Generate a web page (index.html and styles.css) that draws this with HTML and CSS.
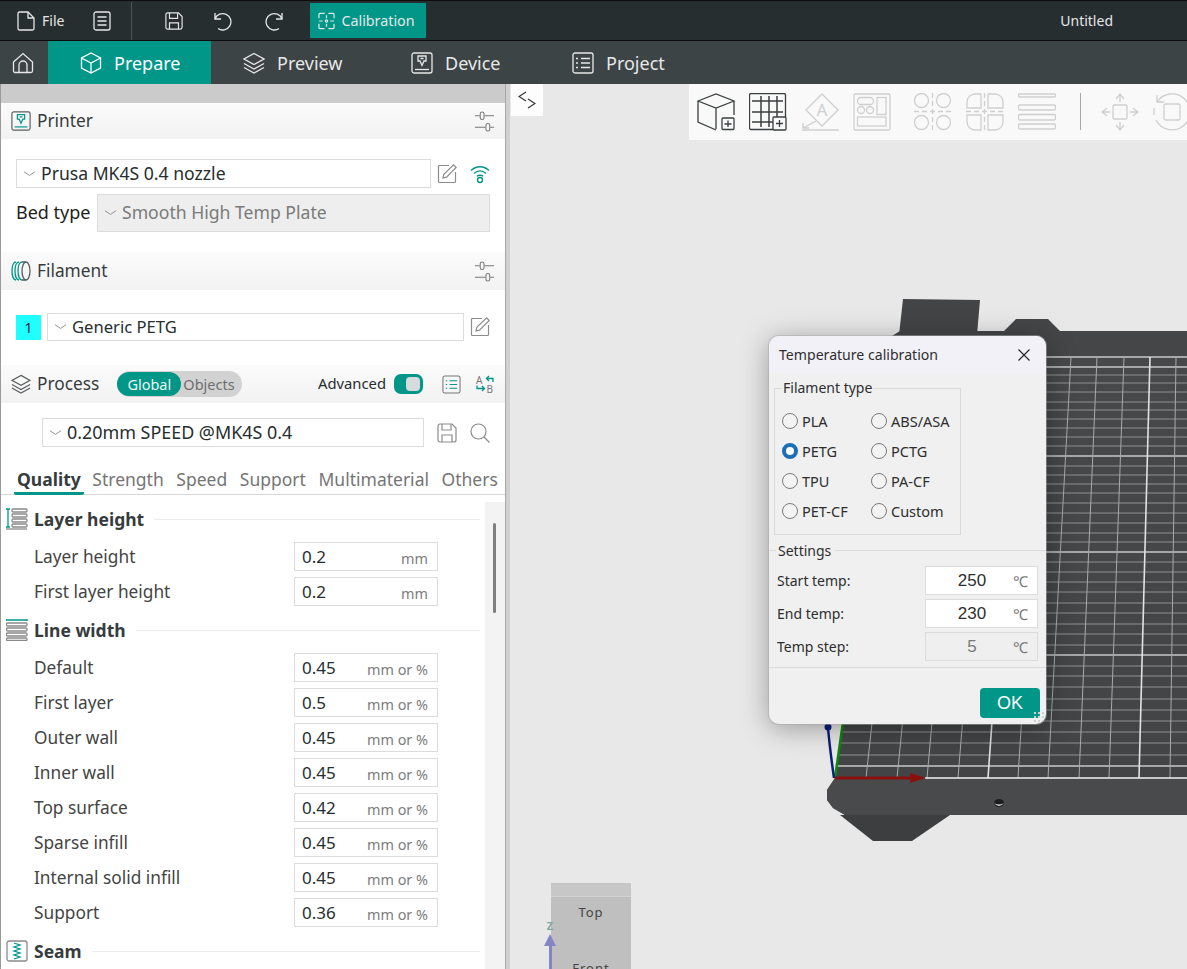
FILE: index.html
```html
<!DOCTYPE html>
<html lang="en">
<head>
<meta charset="utf-8">
<title>Untitled</title>
<link rel="stylesheet" href="styles.css">
</head>
<body>
<svg class="defs">
  <symbol id="i-adjust" viewBox="0 0 22 22"><path d="M1 5H6M11 5H21M1 17H12M17 17H21"/><rect x="6.5" y="1" width="4" height="8" rx="2"/><rect x="12.5" y="13" width="4" height="8" rx="2"/></symbol>
  <symbol id="i-edit" viewBox="0 0 20 20"><path d="M12 1.5H2.5a1 1 0 0 0-1 1v15a1 1 0 0 0 1 1h15a1 1 0 0 0 1-1V8"/><path d="M6 14l.8-3.6L16.6 .9l2.6 2.6L9.5 13.200z"/></symbol>
  <symbol id="i-save" viewBox="0 0 20 20"><path d="M3 1H15L19 5V17a2 2 0 0 1-2 2H3a2 2 0 0 1-2-2V3a2 2 0 0 1 2-2z"/><path d="M5 1V7H14V1M5 19V12H15V19"/></symbol>
  <symbol id="i-chev" viewBox="0 0 14 8"><path d="M1 1.500L7 5.500L13 1.500"/></symbol>
  <symbol id="i-device" viewBox="0 0 22 22"><rect x="1" y="1" width="20" height="20" rx="2"/><path class="accent" d="M4 17.500H18"/><path class="accent" d="M7 4H15V9H13L11 13.500L9 9H7zM9.500 6.500H12.500"/></symbol>
  <symbol id="i-layers" viewBox="0 0 22 22"><path d="M11 1.500L21 7L11 12.500L1 7z"/><path d="M1 11.500L11 17L21 11.500"/><path d="M1 15.500L11 21L21 15.500"/></symbol>
</svg>

<div class="app">
  <header class="titlebar">
    <div class="tb-item">
      <svg class="ic tb-ic" viewBox="0 0 18 20"><path d="M2.500 1H11L17 7V17.500a1.500 1.500 0 0 1-1.500 1.500H2.500A1.500 1.500 0 0 1 1 17.500V2.500A1.500 1.500 0 0 1 2.500 1z"/><path d="M11 1V7H17"/></svg>
      <span>File</span>
    </div>
    <svg class="ic tb-ic tb-doc" viewBox="0 0 18 20"><rect x="1" y="1" width="16" height="18" rx="2"/><path d="M4.500 6H13.500M4.500 10H13.500M4.500 14H13.500"/></svg>
    <div class="tb-sep"></div>
    <svg class="ic tb-ic tb-save"><use href="#i-save"/></svg>
    <svg class="ic tb-ic tb-undo" viewBox="0 0 20 20"><path d="M3 2V8H9"/><path d="M3 8A8.200 8.200 0 1 1 6 17.500"/></svg>
    <svg class="ic tb-ic tb-redo" viewBox="0 0 20 20"><path d="M17 2V8H11"/><path d="M17 8A8.200 8.200 0 1 0 14 17.500"/></svg>
    <div class="tb-calib">
      <svg class="ic tb-ic" viewBox="0 0 18 18"><path d="M1 6V2a1 1 0 0 1 1-1H7M11 1H16a1 1 0 0 1 1 1V6M17 12V16a1 1 0 0 1-1 1H11M7 17H2a1 1 0 0 1-1-1V12M1 9H5M13 9H17M9 3V6M9 12V15"/><circle cx="9" cy="9" r="1.200"/></svg>
      <span>Calibration</span>
    </div>
    <div class="tb-title">Untitled</div>
  </header>

  <nav class="navbar">
    <div class="nav-home">
      <svg class="ic nav-ic" viewBox="0 0 22 22"><path d="M1.500 10L11 1.500L20.500 10V19a1.500 1.500 0 0 1-1.500 1.500H3A1.500 1.500 0 0 1 1.500 19z"/><path d="M7 20.500V13a4 4 0 0 1 8 0V20.500"/></svg>
    </div>
    <div class="nav-tab nav-active w-prepare">
      <svg class="ic nav-ic" viewBox="0 0 22 22"><path d="M11 1L20.500 6V16L11 21L1.500 16V6z"/><path d="M1.500 6L11 11L20.500 6M11 11V21"/></svg>
      <span>Prepare</span>
    </div>
    <div class="nav-tab w-preview">
      <svg class="ic nav-ic"><use href="#i-layers"/></svg>
      <span>Preview</span>
    </div>
    <div class="nav-tab w-device">
      <svg class="ic nav-ic"><use href="#i-device"/></svg>
      <span>Device</span>
    </div>
    <div class="nav-tab">
      <svg class="ic nav-ic" viewBox="0 0 22 22"><rect x="1" y="1" width="20" height="20" rx="2"/><path d="M4 6.500H6M9 6.500H18M4 11H6M9 11H18M4 15.500H6M9 15.500H18"/></svg>
      <span>Project</span>
    </div>
  </nav>

  <main class="workspace">
    <aside class="sidebar">
      <div class="side-gap"></div>

      <div class="sec-head sec-printer">
        <svg class="ic head-ic"><use href="#i-device"/></svg>
        <span class="sec-title">Printer</span>
        <svg class="ic adjust"><use href="#i-adjust"/></svg>
      </div>
      <div class="printer-row">
        <div class="select sel-printer"><svg class="ic chev"><use href="#i-chev"/></svg><span>Prusa MK4S 0.4 nozzle</span></div>
        <svg class="ic act"><use href="#i-edit"/></svg>
        <svg class="ic wifi" viewBox="0 0 20 20"><path d="M1 6.500C6 1.500 14 1.500 19 6.500M4 9.500C7.500 6 12.500 6 16 9.500M6.800 12.300C8.500 10.800 11.500 10.800 13.200 12.300"/><circle cx="10" cy="16" r="2.500"/></svg>
      </div>
      <div class="bed-row">
        <span class="bed-label">Bed type</span>
        <div class="select sel-bed"><svg class="ic chev"><use href="#i-chev"/></svg><span>Smooth High Temp Plate</span></div>
      </div>

      <div class="sec-head sec-filament">
        <svg class="ic head-ic fil-ic" viewBox="0 0 20 20"><path class="accent" d="M5 1C2.500 1 1 5 1 10S2.500 19 5 19M8 1C5.500 1 4 5 4 10S5.500 19 8 19M11 1C8.500 1 7 5 7 10S8.500 19 11 19"/><ellipse cx="15" cy="10" rx="4" ry="9"/><path d="M11 1H15M11 19H15"/></svg>
        <span class="sec-title">Filament</span>
        <svg class="ic adjust"><use href="#i-adjust"/></svg>
      </div>
      <div class="filament-row">
        <div class="swatch">1</div>
        <div class="select sel-filament"><svg class="ic chev"><use href="#i-chev"/></svg><span>Generic PETG</span></div>
        <svg class="ic act"><use href="#i-edit"/></svg>
      </div>

      <div class="sec-head sec-process">
        <svg class="ic head-ic"><use href="#i-layers"/></svg>
        <span class="sec-title">Process</span>
        <div class="pill"><span class="pill-on">Global</span><span class="pill-off">Objects</span></div>
        <span class="adv">Advanced</span>
        <div class="toggle"><span class="knob"></span></div>
        <svg class="ic proc-list" viewBox="0 0 20 20"><rect x="1" y="1" width="18" height="18" rx="2"/><path class="accent" d="M4 6H5.500M4 10H5.500M4 14H5.500M8 6H16M8 10H16M8 14H16"/></svg>
        <svg class="ic proc-ab" viewBox="0 0 20 20"><text class="ab" x="1" y="9.500">A</text><text class="ab" x="11.500" y="18.500">B</text><path class="accent" d="M18 8V4.500H11.500M14 2L11.500 4.500L14 7M2 11.500V14.500H9M7 12L9.500 14.500L7 17"/></svg>
      </div>
      <div class="process-row">
        <div class="select sel-process"><svg class="ic chev"><use href="#i-chev"/></svg><span>0.20mm SPEED @MK4S 0.4</span></div>
        <svg class="ic act act-save"><use href="#i-save"/></svg>
        <svg class="ic act act-search" viewBox="0 0 20 20"><circle cx="8.500" cy="8.500" r="7.500"/><path d="M14 14L19.500 19.500"/></svg>
      </div>

      <div class="tabs">
        <span class="tab tab-on">Quality</span>
        <span class="tab">Strength</span>
        <span class="tab">Speed</span>
        <span class="tab">Support</span>
        <span class="tab">Multimaterial</span>
        <span class="tab">Others</span>
      </div>

      <div class="params">
        <div class="param-list">
          <div class="group">
            <svg class="ic group-ic" viewBox="0 0 22 22"><path class="accent" d="M2 1V19M0 1H4M0 19H4"/><rect x="6" y="1" width="15" height="3" rx="1"/><rect x="6" y="6" width="15" height="3" rx="1"/><rect x="6" y="11" width="15" height="3" rx="1"/><rect x="6" y="16" width="15" height="3" rx="1"/><path d="M0 21H21"/></svg>
            <span class="group-title">Layer height</span>
          </div>
          <div class="row"><span class="row-label">Layer height</span><div class="field"><span class="val">0.2</span><span class="unit">mm</span></div></div>
          <div class="row"><span class="row-label">First layer height</span><div class="field"><span class="val">0.2</span><span class="unit">mm</span></div></div>

          <div class="group">
            <svg class="ic group-ic" viewBox="0 0 22 22"><path class="accent" d="M0 1H21M0 0V2M21 0V2"/><rect x="0.500" y="4" width="20.500" height="3" rx="1"/><rect x="0.500" y="9" width="20.500" height="3" rx="1"/><rect x="0.500" y="14" width="20.500" height="3" rx="1"/><rect x="0.500" y="19" width="20.500" height="2.500" rx="1"/></svg>
            <span class="group-title">Line width</span>
          </div>
          <div class="row"><span class="row-label">Default</span><div class="field"><span class="val">0.45</span><span class="unit">mm or %</span></div></div>
          <div class="row"><span class="row-label">First layer</span><div class="field"><span class="val">0.5</span><span class="unit">mm or %</span></div></div>
          <div class="row"><span class="row-label">Outer wall</span><div class="field"><span class="val">0.45</span><span class="unit">mm or %</span></div></div>
          <div class="row"><span class="row-label">Inner wall</span><div class="field"><span class="val">0.45</span><span class="unit">mm or %</span></div></div>
          <div class="row"><span class="row-label">Top surface</span><div class="field"><span class="val">0.42</span><span class="unit">mm or %</span></div></div>
          <div class="row"><span class="row-label">Sparse infill</span><div class="field"><span class="val">0.45</span><span class="unit">mm or %</span></div></div>
          <div class="row"><span class="row-label">Internal solid infill</span><div class="field"><span class="val">0.45</span><span class="unit">mm or %</span></div></div>
          <div class="row"><span class="row-label">Support</span><div class="field"><span class="val">0.36</span><span class="unit">mm or %</span></div></div>

          <div class="group">
            <svg class="ic group-ic" viewBox="0 0 22 22"><rect x="1" y="1" width="20" height="20" rx="2"/><path class="accent" d="M8 3L14 5L8 7L14 9L8 11L14 13L8 15L14 17L8 19"/></svg>
            <span class="group-title">Seam</span>
          </div>
        </div>
        <div class="scroll-track"><div class="scroll-thumb"></div></div>
      </div>
    </aside>

    <div class="splitter"></div>

    <section class="viewport">
      <svg class="scene" viewBox="510 84 677 885">
        <defs>
          <linearGradient id="bedfill" x1="0" y1="0" x2="0" y2="1">
            <stop offset="0" stop-color="#464849"/>
            <stop offset="1" stop-color="#424445"/>
          </linearGradient>
        </defs>
        <path class="bed-flag" d="M903 299L980 300L977 335H899z"/>
        <path class="bed-body" d="M827 800V790L835 778L843 724L892 336L900 331H1004L1016 319H1048L1060 331H1187V815H845L833 808z"/>
        <path class="bed-foot" d="M840 815H950L912 841H873z"/>
        <path class="bed-front" d="M827 800V790L835 778H1187V815H845L833 808z"/>
        <path class="bed-top" d="M893 357H1187V778H835z"/>
        <ellipse class="bed-hole" cx="999" cy="803" rx="5" ry="4"/>
        <path class="bed-hole-lit" d="M994 803Q999 809 1004 803Q999 806 994 803z"/>
        <g class="grid-h">
          <path d="M900 375H1187M900 383H1187M900 392H1187M900 402H1187M900 410H1187M900 419H1187M900 428H1187M900 437H1187M900 446H1187M900 466H1187M900 475H1187M900 484H1187M900 493H1187M900 503H1187M900 513H1187M900 523H1187M900 533H1187M900 542H1187M900 562H1187M900 572H1187M900 582H1187M900 592H1187M900 603H1187M900 613H1187M900 624H1187M900 634H1187M900 645H1187M900 666H1187M900 676H1187M900 687H1187M900 699H1187M900 710H1187M900 721H1187M842 732H1187M841 743H1187M839 755H1187"/>
        </g>
        <g class="grid-hb">
          <path d="M900 357H1187M900 367H1187M900 456H1187M900 552H1187M900 655H1187M837 766H1187"/>
        </g>
        <g class="grid-v">
          <path d="M912 357L866 778M939 357L897 778M965 357L927 778M992 357L958 778M1044 357L1018 778M1071 357L1048 778M1097 357L1079 778M1124 357L1109 778M1176 357L1170 778"/>
        </g>
        <g class="grid-vb">
          <path d="M1018 357L988 778M1150 357L1139 778"/>
        </g>
        <path class="bed-edge" d="M925 778H1187"/>
        <path class="axis-y" d="M835 778L843 722"/>
        <path class="axis-z" d="M834 778Q830 750 828 728"/>
        <circle class="axis-z-tip" cx="828" cy="727" r="3.500"/>
        <path class="axis-x" d="M835 778H912"/>
        <path class="axis-x-tip" d="M910 773L926 778L910 783z"/>
      </svg>

      <div class="collapse">
        <svg class="ic collapse-ic" viewBox="0 0 18 18"><path d="M8 1L1 5.500L8 10M10 8L17 12.500L10 17"/></svg>
      </div>

      <div class="toolbar">
        <svg class="tool tool-on" viewBox="0 0 38 38"><path d="M1 8L19 1L37 8L19 15zM1 8V29L19 37M19 15V36M37 8V22"/><rect x="25" y="25" width="12" height="11.500" rx="1"/><path d="M27.500 31H34.500M31 27.500V34"/></svg>
        <svg class="tool tool-on" viewBox="0 0 38 38"><path d="M24 36.500H2a1.500 1.500 0 0 1-1.500-1.500V2A1.500 1.500 0 0 1 2 .5H35A1.500 1.500 0 0 1 36.500 2V24"/><path class="thick" d="M3 8H34M3 19H34M3 29H24M12 3V34M20 3V34M28 3V24"/><rect class="paper" x="24" y="24" width="13" height="13" rx="1"/><path d="M27 30.500H34M30.500 27V34"/></svg>
        <svg class="tool" viewBox="0 0 38 38"><path d="M21 1L37 17L21 33L5 17z"/><path d="M15 28L2 35V30M2 35H8M1 37H38"/><text class="tool-a" x="21" y="23">A</text></svg>
        <svg class="tool" viewBox="0 0 38 38"><rect x="1" y="1" width="36" height="36" rx="1.500"/><rect x="4.500" y="4.500" width="16" height="7" rx="3.500"/><circle cx="8" cy="17" r="3.500"/><circle cx="17" cy="17" r="3.500"/><rect x="24" y="4.500" width="9" height="17"/><rect x="4.500" y="24" width="28.500" height="9"/></svg>
        <svg class="tool tool-gap" viewBox="0 0 38 38"><circle cx="7.500" cy="7.500" r="7"/><circle cx="29.500" cy="7.500" r="7"/><circle cx="7.500" cy="29.500" r="7"/><circle cx="29.500" cy="29.500" r="7"/><path d="M18.500 0V38M0 18.500H38" stroke-dasharray="5 3"/></svg>
        <svg class="tool" viewBox="0 0 38 38"><path d="M15 1H9A8 8 0 0 0 1 9V15H15zM22 1H29A8 8 0 0 1 37 9V15H22zM15 22H1V29A8 8 0 0 0 9 37H15zM22 22H37V29A8 8 0 0 1 29 37H22z"/><path d="M18.500 0V38M0 18.500H38" stroke-dasharray="5 3"/></svg>
        <svg class="tool" viewBox="0 0 38 38"><rect x="0.500" y="1" width="37" height="3" rx="1"/><rect x="0.500" y="12" width="37" height="5" rx="1.500"/><rect x="0.500" y="21.500" width="37" height="5.500" rx="1.500"/><rect x="0.500" y="31" width="37" height="5" rx="1.500"/></svg>
        <div class="tool-sep"></div>
        <svg class="tool tool-move" viewBox="0 0 38 38"><rect x="12" y="12" width="14" height="14" rx="1.500"/><path d="M19 2V9M15 6L19 1L23 6M19 29V36M15 32L19 37L23 32M2 19H9M6 15L1 19L6 23M29 19H36M32 15L37 19L32 23"/></svg>
        <svg class="tool" viewBox="0 0 38 38"><rect x="11" y="11" width="16" height="16" rx="1.500"/><path d="M4 9A18 18 0 1 1 3 27" /><path d="M4 2V9H11"/><path d="M1 15V22" /></svg>
      </div>

      <div class="gizmo">
        <div class="gizmo-top"></div>
        <div class="gizmo-label">Top</div>
        <div class="gizmo-label gizmo-front">Front</div>
      </div>
      <div class="gizmo-axis">
        <span class="gizmo-z">Z</span>
        <span class="gizmo-tip"></span>
        <span class="gizmo-line"></span>
      </div>

      <div class="dialog">
        <div class="dlg-title">
          <span>Temperature calibration</span>
          <svg class="ic dlg-close" viewBox="0 0 12 12"><path d="M0.500 .5L11.500 11.500M11.500 .5L.5 11.500"/></svg>
        </div>
        <fieldset class="dlg-fil">
          <legend>Filament type</legend>
          <div class="radio-grid">
            <label class="radio"><input type="radio" name="fil">PLA</label>
            <label class="radio"><input type="radio" name="fil">ABS/ASA</label>
            <label class="radio"><input type="radio" name="fil" checked>PETG</label>
            <label class="radio"><input type="radio" name="fil">PCTG</label>
            <label class="radio"><input type="radio" name="fil">TPU</label>
            <label class="radio"><input type="radio" name="fil">PA-CF</label>
            <label class="radio"><input type="radio" name="fil">PET-CF</label>
            <label class="radio"><input type="radio" name="fil">Custom</label>
          </div>
        </fieldset>
        <div class="dlg-settings-head"><span>Settings</span></div>
        <div class="dlg-row"><span class="dlg-label">Start temp:</span><div class="dlg-field"><span class="dlg-val">250</span><span class="dlg-unit">℃</span></div></div>
        <div class="dlg-row"><span class="dlg-label">End temp:</span><div class="dlg-field"><span class="dlg-val">230</span><span class="dlg-unit">℃</span></div></div>
        <div class="dlg-row"><span class="dlg-label">Temp step:</span><div class="dlg-field dlg-off"><span class="dlg-val">5</span><span class="dlg-unit">℃</span></div></div>
        <div class="dlg-foot"><button class="dlg-ok" type="button">OK</button></div>
        <div class="grip"></div>
      </div>
    </section>
  </main>
</div>
</body>
</html>
```
FILE: styles.css
```css
* { box-sizing: border-box; }
html, body { margin: 0; height: 100%; }
body { font-family: "Noto Sans", "Liberation Sans", sans-serif; color: #262e30; overflow: hidden; }
.defs { display: none; }
.app { display: flex; flex-direction: column; height: 969px; width: 1187px; overflow: hidden; }
.ic { fill: none; stroke: currentColor; stroke-width: 1.3; flex: none; display: block; }
.accent { stroke: var(--acc, #009688); }

/* title bar */
.titlebar { height: 41px; flex: none; background: #262e30; border-top: 1px solid #0c0c0c; border-bottom: 1px solid #0c0c0c; display: flex; align-items: center; color: #e6e6e6; font-size: 14px; padding-left: 17px; }
.tb-item { display: flex; align-items: center; gap: 7px; }
.tb-ic { width: 18px; height: 20px; }
.tb-doc { margin-left: 29px; }
.tb-sep { width: 1px; height: 38px; background: #4c5456; margin-left: 20px; }
.tb-save { margin-left: 33px; }
.tb-undo { margin-left: 29px; width: 20px; }
.tb-redo { margin-left: 33px; width: 20px; }
.tb-calib { margin-left: 25px; width: 116px; height: 35px; background: #009688; display: flex; align-items: center; gap: 6px; padding-left: 8px; font-size: 14.300px; }
.tb-calib .tb-ic { width: 17px; height: 18px; }
.tb-title { margin-left: auto; margin-right: 74px; }

/* nav */
.navbar { height: 43px; flex: none; background: #3d4446; display: flex; align-items: stretch; color: #e8e8e8; font-size: 18px; --acc: currentColor; }
.nav-home { width: 48px; display: flex; align-items: center; padding-left: 12px; }
.nav-ic { width: 22px; height: 22px; }
.nav-tab { display: flex; align-items: center; gap: 12px; padding-left: 32px; }
.nav-active { background: #009688; color: #fff; }
.w-prepare { width: 163px; }
.w-preview { width: 168px; }
.w-device { width: 161px; }

/* workspace */
.workspace { flex: 1; display: flex; min-height: 0; }
.sidebar { width: 505px; flex: none; background: #fff; border-left: 1px solid #9a9a9a; display: flex; flex-direction: column; min-height: 0; overflow: hidden; }
.side-gap { height: 19px; flex: none; background: #cbcbcb; margin-left: -1px; }
.splitter { width: 5px; flex: none; background: #d0d0d0; border-left: 1px solid #a8a8a8; }

.sec-head { flex: none; display: flex; align-items: center; background: linear-gradient(#fbfbfb, #f2f2f2); padding-left: 10px; font-size: 17.300px; }
.sec-printer { height: 36px; }
.sec-filament { height: 38px; margin-top: 20px; }
.sec-process { height: 38px; margin-top: 24px; }
.head-ic { width: 20px; height: 20px; color: #5a5f60; }
.sec-title { margin: -2px 0 0 6px; color: #363c3e; }
.adjust { width: 21px; height: 21px; margin-left: auto; margin-right: 10px; color: #777; stroke-width: 1.1; }

.select { display: flex; align-items: center; height: 29px; border: 1px solid #dcdcdc; background: #fff; font-size: 17.600px; color: #262e30; padding-left: 6px; gap: 5px; }
.select span { margin-top: -2px; }
.chev { width: 13px; height: 8px; color: #8a8a8a; stroke-width: 1; }
.printer-row { display: flex; align-items: center; margin: 20px 0 0 15px; flex: none; }
.sel-printer { width: 415px; }
.act { width: 20px; height: 20px; margin-left: 6px; color: #8c8c8c; stroke-width: 1.2; }
.wifi { width: 20px; height: 20px; margin-left: 13px; color: #009688; stroke-width: 1.4; }
.bed-row { display: flex; align-items: center; margin: 6px 0 0 15px; flex: none; }
.bed-label { width: 81px; font-size: 18px; color: #1e1e1e; margin-top: -2px; }
.sel-bed { width: 393px; height: 38px; background: #eeeeee; color: #7a7a7a; }

.filament-row { display: flex; align-items: center; margin: 23px 0 0 15px; flex: none; }
.swatch { width: 25px; height: 25px; background: #1fffff; font-size: 14px; display: flex; align-items: center; justify-content: center; margin-right: 6px; }
.sel-filament { width: 417px; height: 28px; font-size: 16.600px; }
.filament-row .act { margin-left: 6px; }

.pill { display: flex; align-items: center; margin-left: 18px; width: 125px; height: 26px; background: #d2d2d2; border-radius: 13px; font-size: 14.500px; }
.pill-on { background: #009688; color: #e9f5f3; height: 24px; width: 64px; border-radius: 12px; display: flex; align-items: center; justify-content: center; }
.pill-off { color: #6e6e6e; margin-left: 2px; }
.adv { margin-left: auto; font-size: 14.800px; color: #262e30; margin-top: -2px; }
.toggle { margin-left: 8px; width: 29px; height: 20px; background: #009688; border-radius: 7px; padding: 3px 3px 3px 12px; }
.knob { display: block; width: 14px; height: 14px; background: #d6dcdc; border-radius: 4px; }
.proc-list { width: 19px; height: 19px; margin-left: 19px; color: #777; stroke-width: 1.1; }
.proc-ab { width: 20px; height: 20px; margin-left: 14px; margin-right: 10px; color: #777; stroke-width: 1.3; }
.ab { font-size: 10px; fill: #777; stroke: none; }

.process-row { display: flex; align-items: center; margin: 15px 0 0 41px; flex: none; }
.sel-process { width: 382px; font-size: 17.900px; }
.act-save { margin-left: 13px; }
.act-search { margin-left: 13px; }

.tabs { flex: none; height: 48px; display: flex; align-items: flex-end; gap: 12.600px; padding-left: 17px; border-bottom: 1px solid #d8d8d8; margin-left: -1px; font-size: 17.500px; color: #757575; white-space: nowrap; }
.tab { height: 32px; padding-top: 5px; }
.tab-on { font-weight: 700; color: #363c3e; border-bottom: 3px solid #009688; height: 33px; margin-left: -3px; padding: 5px 3px 0; margin-right: -4px; margin-bottom: -1px; border-radius: 2px; }

.params { flex: 1; display: flex; min-height: 0; }
.param-list { width: 484px; flex: none; padding: 6px 5px 0 5px; }
.scroll-track { flex: 1; margin-top: 7px; background: #f3f3f3; padding: 21px 0 0 8px; }
.scroll-thumb { width: 3px; height: 90px; background: #808080; border-radius: 2px; }

.group { height: 36px; margin-bottom: 5px; display: flex; align-items: center; }
.group-ic { width: 22px; height: 22px; color: #8a8a8a; }
.group-title { font-weight: 700; font-size: 17.500px; color: #363c3e; margin-left: 6px; display: flex; }
.group::after { content: ""; flex: 1; height: 1px; background: #ececec; margin-left: 10px; }
.row { display: flex; align-items: center; height: 29px; margin-bottom: 6px; padding-left: 28px; }
.row-label { width: 260px; font-size: 17.300px; color: #444; }
.field { width: 144px; height: 29px; border: 1px solid #dcdcdc; display: flex; align-items: center; justify-content: space-between; padding: 0 9px 0 7px; }
.val { font-size: 17px; color: #262e30; }
.unit { font-size: 14.400px; color: #7d7d7d; margin-top: 3px; }

/* viewport */
.viewport { flex: 1; position: relative; background: #e8e8e8; overflow: hidden; min-width: 0; }
.scene { position: absolute; left: 0; top: 0; width: 677px; height: 885px; }
.bed-flag { fill: #424445; }
.bed-body { fill: #444647; }
.bed-foot { fill: #3c3e3f; }
.bed-front { fill: #484a4b; }
.bed-top { fill: url(#bedfill); }
.bed-hole { fill: #1e1e1e; }
.bed-hole-lit { fill: #e6e6e6; }
.grid-h path { stroke: #8f9191; stroke-width: 1; fill: none; }
.grid-hb path { stroke: #c6c7c7; stroke-width: 1.500; fill: none; }
.grid-v path { stroke: #a9abab; stroke-width: 1; fill: none; }
.grid-vb path { stroke: #e2e2e2; stroke-width: 1.600; fill: none; }
.bed-edge { stroke: #f2f2f2; stroke-width: 1.500; fill: none; }
.axis-y { stroke: #0b8a0b; stroke-width: 2.500; fill: none; }
.axis-z { stroke: #0c1f7a; stroke-width: 2.500; fill: none; }
.axis-z-tip { fill: #0c1f7a; }
.axis-x { stroke: #8a1010; stroke-width: 3; fill: none; }
.axis-x-tip { fill: #8a1010; }

.collapse { position: absolute; left: 1px; top: 0; width: 32px; height: 32px; background: #fdfdfd; padding: 7px; }
.collapse-ic { width: 18px; height: 18px; color: #333; stroke-width: 1.200; }

.toolbar { position: absolute; left: 179px; top: 0; right: 0; height: 56px; background: #f9f9f9; display: flex; align-items: flex-start; gap: 14px; padding: 9px 0 0 8px; overflow: hidden; }
.tool { width: 38px; height: 38px; flex: none; fill: none; stroke: #cfcfcf; stroke-width: 1.300; }
.tool-on { stroke: #3a3f40; }
.thick { stroke-width: 1.500; }
.paper { fill: #f9f9f9; }
.tool-a { font-size: 17px; fill: #cfcfcf; stroke: none; text-anchor: middle; }
.tool-gap { margin-left: 9px; }
.tool-sep { width: 1px; height: 37px; background: #a8a8a8; flex: none; margin-left: 10px; }
.tool-move { margin-left: 6px; }

.gizmo { position: absolute; left: 41px; top: 799px; width: 80px; height: 90px; background: #bfbfbf; }
.gizmo-top { height: 14px; background: #c7c7c7; border-bottom: 1px solid #d2d2d2; }
.gizmo-label { font-size: 13px; text-align: center; color: #444; margin-top: 6px; letter-spacing: 1px; }
.gizmo-front { margin-top: 38px; }
.gizmo-axis { position: absolute; left: 34px; top: 835px; width: 12px; display: flex; flex-direction: column; align-items: center; }
.gizmo-z { font-size: 11px; line-height: 13px; color: #7fa5a0; font-weight: 700; }
.gizmo-tip { width: 0; height: 0; border-left: 6px solid transparent; border-right: 6px solid transparent; border-bottom: 12px solid #8585c4; margin-top: 2px; }
.gizmo-line { width: 3px; height: 30px; background: #8585c4; }

/* dialog */
.dialog { position: absolute; left: 259px; top: 252px; width: 277px; height: 388px; background: #f0f0f0; border-radius: 10px; box-shadow: 0 0 0 1px rgba(170, 170, 170, .5), 0 4px 28px rgba(0, 0, 0, .35); overflow: hidden; font-size: 14px; color: #2e2e2e; }
.dlg-title { height: 37px; background: #f3f1f8; display: flex; align-items: center; justify-content: space-between; padding: 0 16px 0 10px; font-size: 14.100px; }
.dlg-title span { margin-top: -1px; }
.dlg-close { width: 12px; height: 12px; color: #222; stroke-width: 1.100; }
.dlg-fil { margin: 6px 0 0 5px; width: 185px; height: 156px; border: 1px solid #dadada; padding: 9px 0 0 7px; }
.dlg-fil legend { padding: 0 1px; margin-left: 0; font-size: 14px; line-height: 18px; }
.radio-grid { display: grid; grid-template-columns: 89px 89px; grid-auto-rows: 30px; }
.radio { display: flex; align-items: center; gap: 4px; white-space: nowrap; font-size: 14.500px; }
.radio input { appearance: none; width: 16px; height: 16px; margin: 0; border: 1px solid #7a7a7a; border-radius: 50%; background: #f3f3f3; flex: none; }
.radio input:checked { border: 4.500px solid #1a6fb8; background: #fff; }
.dlg-settings-head { display: flex; align-items: center; margin-top: 6px; height: 18px; margin-bottom: 7px; }
.dlg-settings-head span { margin: 0 4px 0 9px; }
.dlg-settings-head::before { content: ""; position: absolute; width: 7px; height: 1px; background: #dadada; }
.dlg-settings-head::after { content: ""; flex: 1; height: 1px; background: #dadada; }
.dlg-row { display: flex; align-items: center; height: 29px; margin-bottom: 4px; padding-left: 8px; }
.dlg-label { width: 148px; }
.dlg-field { width: 113px; height: 29px; background: #fff; border: 1px solid #dcdcdc; display: flex; align-items: center; }
.dlg-off { background: #efefef; color: #777; }
.dlg-val { width: 92px; text-align: center; font-size: 17px; font-family: "Liberation Sans", sans-serif; }
.dlg-unit { font-size: 15px; color: #777; margin-left: -5px; }
.dlg-foot { border-top: 1px solid #dadada; margin-top: 6px; padding: 20px 6px 0 0; display: flex; justify-content: flex-end; }
.dlg-ok { width: 60px; height: 30px; border: 0; border-radius: 4px; background: #009688; color: #fff; font-family: "Liberation Sans", sans-serif; font-size: 18px; padding: 0; }
.grip { position: absolute; right: 2px; bottom: 2px; width: 11px; height: 11px; background: radial-gradient(circle, #cfcfcf 1.300px, transparent 1.500px) 0 0 / 4px 4px; }
```
